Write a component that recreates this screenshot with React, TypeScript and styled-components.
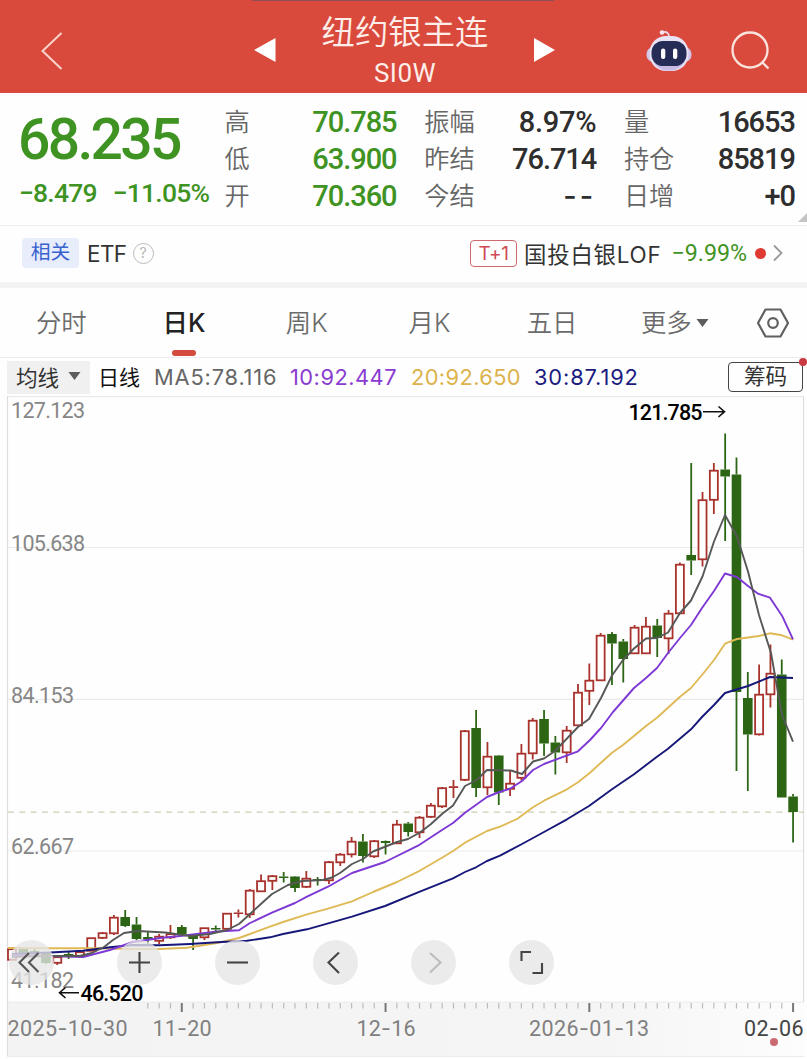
import React from "react";
import styled, { createGlobalStyle } from "styled-components";

const NUM = `Roboto, "Noto Sans CJK SC", sans-serif`;
const CJK = `Inter, "Noto Sans CJK SC", sans-serif`;

const GlobalStyle = createGlobalStyle`
  * { box-sizing: border-box; }
  body { margin: 0; background: #fff; font-family: ${CJK}; }
`;

const Page = styled.div`
  width: 807px;
  height: 1059px;
  overflow: hidden;
  background: #fefefe;
  display: flex;
  flex-direction: column;
`;

/* ---------- header ---------- */
const Header = styled.header`
  height: 93px;
  flex: none;
  background: #d94a3c;
  color: #fdeeea;
  display: grid;
  grid-template-columns: 254px 302px 251px;
  align-items: center;
`;
const HeaderLeft = styled.div`
  padding: 9px 0 0 40px;
  display: flex;
`;
const HeaderMid = styled.div`
  display: flex;
  align-items: center;
  justify-content: space-between;
  height: 93px;
`;
const Arrow = styled.svg`
  margin-top: 7px;
  flex: none;
`;
const TitleBlock = styled.div`
  display: flex;
  flex-direction: column;
  align-items: center;
  height: 93px;
`;
const Title = styled.div`
  font-size: 33.4px;
  line-height: 40px;
  font-weight: 350;
  margin-top: 12px;
  white-space: nowrap;
`;
const Code = styled.div`
  font-family: ${NUM};
  font-size: 26px;
  line-height: 32px;
  margin-top: 5px;
  letter-spacing: 0.5px;
`;
const HeaderRight = styled.div`
  display: flex;
  align-items: center;
  padding: 6px 0 0 89px;
  gap: 37px;
`;
const TopEdge = styled.div`
  position: absolute;
  top: 0;
  left: 252px;
  width: 302px;
  height: 1px;
  background: #8d4f55;
`;

/* ---------- quote ---------- */
const Quote = styled.section`
  height: 133px;
  flex: none;
  border-bottom: 1px solid #ededed;
  display: flex;
  position: relative;
  padding: 10px 10px 0 20px;
`;
const Price = styled.div`
  width: 204.5px;
  flex: none;
  color: #3f9323;
  font-family: ${NUM};
`;
const Last = styled.div`
  font-size: 57px;
  font-weight: 500;
  line-height: 70px;
  letter-spacing: -2.7px;
  margin-top: 2px;
  margin-left: -2px;
`;
const Change = styled.div`
  display: flex;
  gap: 16px;
  font-size: 26.5px;
  line-height: 32px;
  margin-top: 2px;
  margin-left: -1px;
  letter-spacing: -0.8px;
  white-space: nowrap;
  font-weight: 500;
`;
const Stats = styled.div`
  display: grid;
  grid-template-columns: 172px 172px 171px;
  grid-auto-rows: 37.3px;
  column-gap: 27.7px;
  align-items: center;
`;
const Stat = styled.div`
  display: flex;
  justify-content: space-between;
  align-items: center;
`;
const StatName = styled.span`
  font-size: 25.2px;
  line-height: 36px;
  color: #666;
  font-weight: 350;
`;
const StatValue = styled.span<{ $down?: boolean; $dash?: boolean; $wide?: boolean }>`
  font-family: ${(p) => (p.$dash ? CJK : NUM)};
  font-weight: 500;
  font-size: 29px;
  line-height: 36px;
  letter-spacing: ${(p) => (p.$dash ? "3px" : p.$wide ? "-0.3px" : "-1.05px")};
  color: ${(p) => (p.$down ? "#3f9323" : "#2e2e2e")};
`;
const Corner = styled.svg`
  position: absolute;
  right: 0;
  bottom: 3px;
`;

/* ---------- related ---------- */
const Related = styled.section`
  height: 62px;
  flex: none;
  border-bottom: 6px solid #f3f3f4;
  display: flex;
  align-items: center;
  padding: 0 24px 2px 22px;
  color: #333;
`;
const Tag = styled.span`
  width: 57px;
  height: 30px;
  background: #e7edfb;
  color: #3a62cf;
  border-radius: 4px;
  font-size: 19.8px;
  line-height: 29px;
  text-align: center;
`;
const Etf = styled.span`
  font-size: 22.5px;
  margin: 0 6px 0 8px;
  letter-spacing: -0.6px;
`;
const Help = styled.span`
  width: 21px;
  height: 21px;
  border: 1.5px solid #bbb;
  border-radius: 50%;
  color: #b4b4b4;
  font-size: 14px;
  line-height: 18px;
  text-align: center;
`;
const Fund = styled.div`
  margin-left: auto;
  display: flex;
  align-items: center;
`;
const T1 = styled.span`
  width: 47px;
  height: 27px;
  border: 1px solid #cf6a70;
  border-radius: 4px;
  color: #cf4a55;
  font-size: 19px;
  line-height: 25px;
  text-align: center;
  letter-spacing: -0.3px;
`;
const FundName = styled.span`
  font-size: 22.4px;
  margin-left: 7px;
  white-space: nowrap;
  letter-spacing: 0.8px;
`;
const FundPct = styled.span`
  font-size: 23.2px;
  font-family: ${NUM};
  color: #3f9323;
  margin-left: 10px;
`;
const Dot = styled.i`
  width: 11px;
  height: 11px;
  border-radius: 50%;
  background: #e03a34;
  margin: 0 7px 0 8px;
`;

/* ---------- tabs ---------- */
const Tabs = styled.nav`
  height: 70px;
  flex: none;
  border-bottom: 1px solid #ececec;
  display: flex;
`;
const Tab = styled.div<{ $active?: boolean }>`
  width: 122.7px;
  flex: none;
  display: flex;
  justify-content: center;
  align-items: center;
  font-size: 25.4px;
  line-height: 72px;
  gap: 4px;
  position: relative;
  color: ${(p) => (p.$active ? "#222" : "#6b6b6b")};
  font-weight: ${(p) => (p.$active ? 500 : 350)};
`;
const Underline = styled.i`
  position: absolute;
  left: 50%;
  margin-left: -12px;
  bottom: 1px;
  width: 24px;
  height: 6px;
  border-radius: 3px;
  background: #d24b3e;
`;
const Gear = styled.div`
  width: 71px;
  padding-left: 3px;
  display: flex;
  align-items: center;
  justify-content: center;
`;

/* ---------- moving averages ---------- */
const MaBar = styled.div`
  height: 38px;
  flex: none;
  display: flex;
  align-items: center;
  padding: 0 4px 0 7px;
  font-size: 21.6px;
  white-space: nowrap;
`;
const Picker = styled.div`
  width: 83px;
  height: 33px;
  background: #f0f0f0;
  display: flex;
  align-items: center;
  gap: 9px;
  padding: 0 0 2px 9px;
  color: #333;
`;
const Period = styled.span`
  width: 56px;
  padding: 0 0 2px 8px;
  font-size: 21px;
  color: #111;
`;
const Ma = styled.span<{ $c: string; $w: number; $ls: number }>`
  width: ${(p) => p.$w}px;
  padding-left: 8px;
  color: ${(p) => p.$c};
  font-size: 21.8px;
  letter-spacing: ${(p) => p.$ls}px;
`;
const Chips = styled.div`
  margin-left: auto;
  position: relative;
  width: 75px;
  height: 30px;
  border: 1.3px solid #444;
  border-radius: 4px;
  text-align: center;
  line-height: 27px;
  color: #333;
`;
const ChipDot = styled.i`
  position: absolute;
  right: -5px;
  top: -5px;
  width: 8px;
  height: 8px;
  border-radius: 50%;
  background: #c93a42;
`;

/* ---------- chart ---------- */
const ChartBox = styled.div`
  position: relative;
  height: 663px;
  flex: none;
`;
const ChartSvg = styled.svg`
  display: block;
  font-family: ${NUM};
`;
const Tool = styled.button<{ $x: number }>`
  position: absolute;
  left: ${(p) => p.$x - 22.5}px;
  top: 543.5px;
  width: 45px;
  height: 45px;
  padding: 0;
  border: 0;
  border-radius: 50%;
  background: rgba(230, 230, 230, 0.78);
  display: flex;
  align-items: center;
  justify-content: center;
`;

// [body top, body bottom, wick top, wick bottom, rising?]
type Candle = [number, number, number, number, 0 | 1];
const candles: Candle[] = [
  [949, 960, 949, 960, 1], [949, 956, 949, 956, 0], [951, 954, 948, 957, 0], [953, 963, 953, 964, 0],
  [957, 963, 957, 965, 1], [954, 956, 951, 959, 0], [952, 956, 950, 957, 1], [938, 951, 938, 951, 1],
  [933, 938, 932, 939, 1], [917.5, 933.5, 915, 935, 1], [917, 926, 910, 927, 0], [924.5, 939, 917, 940, 0],
  [937, 939.5, 932, 945, 0], [936.5, 941, 934, 944, 1], [934, 937.5, 925, 939, 1], [927, 934, 925, 935, 0],
  [934.5, 939, 934, 950, 0], [928, 937.5, 928, 940, 1], [928, 929.5, 925.5, 931.5, 0], [913.5, 929, 913, 930, 1],
  [912.5, 914, 909.5, 917.5, 1], [890.5, 914.5, 889, 918, 1], [881, 891.5, 874.5, 892, 1], [876, 881, 875, 890, 1],
  [876.5, 878, 872, 882.5, 0], [876.5, 888, 876, 892, 0], [878.5, 887, 871, 888, 1], [879, 881, 877, 885.5, 0],
  [862, 880.5, 861, 884, 1], [854.5, 862.5, 853, 866, 1], [841.5, 854.5, 837, 857.5, 1], [841.5, 856, 834, 862.5, 0],
  [841, 856.5, 840, 858, 1], [841, 843, 840.5, 854.5, 0], [824.5, 843.5, 820, 844, 1], [823.5, 832, 822, 836.5, 0],
  [817.5, 832.5, 816, 838, 1], [805.5, 817, 803, 818, 1], [788, 806.5, 787, 808, 1], [786.2, 788, 780, 798, 1],
  [731, 780, 730, 781, 1], [728, 788, 710, 797, 0], [756.5, 787.5, 742, 795, 1], [755.5, 792.5, 755, 805, 0],
  [783.5, 789, 770, 796, 1], [753.5, 778, 744, 780.5, 1], [720.5, 753.5, 718, 759.5, 1], [719, 743.5, 710, 756, 0],
  [742.5, 752.5, 736, 774.5, 0], [730.5, 752.5, 726, 763, 1], [692.5, 725.5, 684, 726, 1], [680.5, 691, 663.5, 705, 1],
  [635.5, 680.5, 633, 681, 1], [634, 643.5, 632, 685, 0], [641.5, 659, 639, 682.5, 0], [627.5, 653.5, 625, 654, 1],
  [626.5, 653.5, 617, 654, 1], [625.5, 638, 619, 657, 0], [613.5, 638.5, 610, 654, 1], [564.5, 613.5, 562.5, 614, 1],
  [555, 560.5, 463, 575, 0], [500, 559.5, 492, 566.5, 1], [470.5, 500, 463, 514, 1], [469.5, 476.5, 433.5, 541, 0],
  [474.5, 692, 457.5, 771, 0], [698, 734.5, 672, 791, 0], [694.5, 734.5, 664.5, 735.5, 1], [673.5, 694.5, 644.5, 707.5, 1],
  [674.5, 797.5, 659.5, 797.5, 0], [796.5, 812, 794, 842.5, 0],
];

const averages = [
  {
    color: "#dfb956",
    points:
      "8,948 50,948.3 100,948.3 133,949 160,949 187,947.7 217,943 239,938 250,934 270,926.7 283,922 307,914.3 328,908.7 352,901.3 373,892 397,882 418,871.7 442,857.7 453,851 465,842.7 487,831 500,826.7 517,819 533,807.3 544,800.7 567,789.3 578,782.3 590,772.7 612,752.7 623,745 646,726 657,717.7 680,696.7 691,688 702,675 714,660 725,643.7 737,639 759,636 770,633.3 782,635.3 793,639.7",
  },
  {
    color: "#17177a",
    points:
      "12,954 50,952.5 83,950.7 110,947.3 133,945 160,945.3 190,944 217,942.3 247,940.7 270,937.3 283,934 307,929.3 352,916.7 385,906 418,892.3 453,878.3 465,872 476,867.3 487,861 500,855.7 522,844 544,832 567,819.3 589,806 612,789.3 634,774.3 657,756.7 668,748.7 691,729.3 702,717 714,705 725,693 748,686 770,677 793,678",
  },
  {
    color: "#7e38d4",
    points:
      "12,955 46,956 83,957 110,950 133,942 160,938 180,936 197,934 217,931.5 239,930.3 250,923 272,912.7 295,903 307,896.7 328,886.7 352,873 385,862 418,845.7 442,830 453,823 465,812.7 487,797 498,792.5 510,788.7 522,781 533,770 544,764 578,751.3 590,740 601,728 613,712 634,688 646,678 657,668 668,653 680,638 691,625 702,608 714,591 725,573.5 737,577 748,586 758,593.7 770,597.7 782,615.7 793,639.3",
  },
  {
    color: "#565856",
    points:
      "12,957 46,956 80,956 92,953 104,947 113,940 124,933 138,931 165,932.5 190,936 210,934 227,930 239,924 250,914 262,903 272,894 288,885 302,881 323,880 332,877.5 340,873 352,864 363,859 373,851.5 397,842 408,839 420,832.5 431,824 442,814 453,805.5 465,786 476,780.5 487,770 511,770.5 522,774 533,761.5 544,758.5 555,751 578,727 589,719 601,698 612,675.5 623,660 634,648.5 646,638.5 657,638 668,632.5 680,613 691,600.5 702.5,576.5 714,541.5 725,515 737,536.5 748,571.5 759,615 771,653 777,687 782,715 793,741.7",
  },
];

const STEP = 11.32;
const cx = (i: number) => 12 + STEP * i;

function CandleMark({ c, i }: { c: Candle; i: number }) {
  const [top, bottom, high, low, up] = c;
  const x = cx(i);
  const color = up ? "#a8322c" : "#2c6614";
  const flat = bottom - top < 3;
  return (
    <g stroke={color} strokeWidth={1.8}>
      {high < top && <line x1={x} x2={x} y1={high} y2={top} />}
      {low > bottom && <line x1={x} x2={x} y1={bottom} y2={low} />}
      {flat ? (
        <rect x={x - 4.7} y={top} width={9.4} height={bottom - top} fill={color} stroke="none" />
      ) : up ? (
        <rect x={x - 4} y={top + 0.2} width={8} height={bottom - top - 0.4} fill="#fff" />
      ) : (
        <rect x={x - 4.8} y={top} width={9.6} height={bottom - top} fill={color} stroke="none" />
      )}
    </g>
  );
}

function Dashed({ text }: { text: string }) {
  return (
    <>
      {text.split("-").map((part, i) => (
        <React.Fragment key={i}>
          {i > 0 && <tspan fontFamily="Inter">-</tspan>}
          {part}
        </React.Fragment>
      ))}
    </>
  );
}

const levels: [string, number][] = [
  ["127.123", 418], ["105.638", 550.5], ["84.153", 702.5], ["62.667", 854], ["41.182", 987.5],
];
const dates: [string, number, number, string][] = [
  ["2025-10-30", 7.5, 120, "#808080"], ["11-20", 152.5, 59, "#808080"], ["12-16", 356.5, 59, "#808080"],
  ["2026-01-13", 529, 120, "#808080"], ["02-06", 744, 59.5, "#444"],
];

function Chart() {
  return (
    <ChartSvg width="807" height="663" viewBox="0 396 807 663">
      <defs>
        <linearGradient id="axis" x1="0" x2="1" y1="0" y2="0">
          <stop offset="0" stopColor="#f3f3f3" />
          <stop offset="0.75" stopColor="#f5f5f5" />
          <stop offset="1" stopColor="#fdfdfd" />
        </linearGradient>
      </defs>
      <rect x="7" y="1002" width="797" height="54" fill="url(#axis)" />
      <g stroke="#ebebeb" strokeWidth="1.2">
        <path d="M7 396.6H804M7 547.5H804M7 699.3H804M7 851H804M7 1002H804M7 1056.5H804" />
        <path d="M7.5 396V1056M803.5 396V1002" stroke="#dedede" />
      </g>
      <path d="M8 812.2H804" stroke="#cdcdb4" strokeWidth="1.2" strokeDasharray="6 5.3" />
      {Array.from({ length: 58 }, (_, k) => k + 12).map((i) => {
        const major = (i - 15) % 18 === 0;
        return (
          <line key={i} x1={cx(i)} x2={cx(i)} y1={1003} y2={major ? 1012 : 1008.5}
            stroke={major ? "#777" : "#bbb"} strokeWidth={major ? 2 : 1.2} />
        );
      })}
      {candles.map((c, i) => <CandleMark key={i} c={c} i={i} />)}
      {averages.map((a) => (
        <polyline key={a.color} points={a.points} fill="none" stroke={a.color} strokeWidth="1.9" strokeLinejoin="round" />
      ))}
      {levels.map(([t, y]) => (
        <text key={t} x="11" y={y} fontSize="21.5" fill="#868686" textLength={t.length === 7 ? 74 : 63}>{t}</text>
      ))}
      <text x="628.5" y="420" fontSize="21.5" fontWeight="500" fill="#000" textLength="74">121.785</text>
      <path d="M703 411.7H724M718.5 406.500L724.500 411.700L718.500 417" fill="none" stroke="#111" strokeWidth="1.6" />
      <text x="80.5" y="1000.5" fontSize="21.5" fontWeight="500" fill="#000" textLength="63">46.520</text>
      <path d="M79 992.7H60M65.500 987.500L59.500 992.700L65.500 998" fill="none" stroke="#111" strokeWidth="1.6" />
      {dates.map(([t, x, w, c]) => (
        <text key={t} x={x} y="1036" fontSize="21.5" fill={c} textLength={w}><Dashed text={t} /></text>
      ))}
      <circle cx="774" cy="1042" r="4" fill="#cc6a72" />
    </ChartSvg>
  );
}

const tools: [number, string, string][] = [
  [31, "M20 13L10.500 22.500L20 32M29.500 13L20 22.500L29.500 32", "#555"],
  [139.5, "M12 22.500H33M22.500 12V33", "#444"],
  [237.5, "M12 22.500H33", "#444"],
  [335.5, "M26 12.500L15.500 22.500L26 33", "#444"],
  [433.5, "M19 13L29.500 22.500L19 32.500", "#bdbdbd"],
  [531.5, "M12.500 21V12H22M33 23V33H23.500", "#444"],
];

const stats: [string, string, boolean?][] = [
  ["高", "70.785", true], ["振幅", "8.97%"], ["量", "16653"],
  ["低", "63.900", true], ["昨结", "76.714"], ["持仓", "85819"],
  ["开", "70.360", true], ["今结", "--"], ["日增", "+0"],
];

const Caret = () => (
  <svg width="13" height="10" viewBox="0 0 13 10"><path d="M0.500 1H12.500L6.500 9Z" fill="#5c5c5c" /></svg>
);

export default function App() {
  return (
    <Page>
      <GlobalStyle />
      <Header>
        <TopEdge />
        <HeaderLeft>
          <svg width="24" height="40" viewBox="0 0 24 40">
            <path d="M21.500 2L2.500 20L21.500 38" fill="none" stroke="#f7d3cc" strokeWidth="2" />
          </svg>
        </HeaderLeft>
        <HeaderMid>
          <Arrow width="22" height="24" viewBox="0 0 22 24"><path d="M0 12L21.500 0V24Z" fill="#fff" /></Arrow>
          <TitleBlock>
            <Title>纽约银主连</Title>
            <Code>SI0W</Code>
          </TitleBlock>
          <Arrow width="22" height="24" viewBox="0 0 22 24"><path d="M21 12L0 0V24Z" fill="#fff" /></Arrow>
        </HeaderMid>
        <HeaderRight>
          <svg width="48" height="44" viewBox="0 0 48 44">
            <path d="M17 4.500C22 3 24 5 24 9" fill="none" stroke="#e9d5e6" strokeWidth="1.800" />
            <circle cx="17" cy="4.500" r="2.300" fill="#f3e4f0" />
            <rect x="1.500" y="19" width="45" height="15" rx="7" fill="#d3c6ea" />
            <rect x="4.500" y="8" width="39" height="35" rx="16.500" fill="#eae2f5" />
            <path d="M8 33C14 46 34 46 40 33" fill="#c8bce6" />
            <rect x="6.500" y="13" width="35" height="25" rx="11.500" fill="#252c56" />
            <rect x="16" y="20.500" width="4.300" height="10.500" rx="2.100" fill="#fff" />
            <rect x="28" y="20.500" width="4.300" height="10.500" rx="2.100" fill="#fff" />
          </svg>
          <svg width="42" height="42" viewBox="0 0 42 42" fill="none" stroke="#fbe3dd" strokeWidth="2.300">
            <circle cx="20" cy="21" r="17.500" />
            <path d="M32 33L38.500 39.500" />
          </svg>
        </HeaderRight>
      </Header>

      <Quote>
        <Price>
          <Last>68.235</Last>
          <Change><span>−8.479</span><span>−11.05%</span></Change>
        </Price>
        <Stats>
          {stats.map(([name, value, down]) => (
            <Stat key={name}>
              <StatName>{name}</StatName>
              <StatValue $down={down} $dash={value === "--"} $wide={value.endsWith("%")}>{value}</StatValue>
            </Stat>
          ))}
        </Stats>
        <Corner width="9" height="9" viewBox="0 0 9 9"><path d="M9 0V9H0Z" fill="#c4c4c4" /></Corner>
      </Quote>

      <Related>
        <Tag>相关</Tag>
        <Etf>ETF</Etf>
        <Help>?</Help>
        <Fund>
          <T1>T+1</T1>
          <FundName>国投白银LOF</FundName>
          <FundPct>−9.99%</FundPct>
          <Dot />
          <svg width="10" height="18" viewBox="0 0 10 18"><path d="M1 1.500L8.500 9L1 16.500" fill="none" stroke="#999" strokeWidth="1.800" /></svg>
        </Fund>
      </Related>

      <Tabs>
        <Tab>分时</Tab>
        <Tab $active>日K<Underline /></Tab>
        <Tab>周K</Tab>
        <Tab>月K</Tab>
        <Tab>五日</Tab>
        <Tab>更多<Caret /></Tab>
        <Gear>
          <svg width="34" height="30" viewBox="0 0 34 30" fill="none" stroke="#606060" strokeWidth="2.200">
            <path d="M9.500 1.500H24.500L32 15L24.500 28.500H9.500L2 15Z" strokeLinejoin="round" />
            <circle cx="17" cy="15" r="4.800" />
          </svg>
        </Gear>
      </Tabs>

      <MaBar>
        <Picker>均线<Caret /></Picker>
        <Period>日线</Period>
        <Ma $c="#666" $w={136} $ls={0.85}>MA5:78.116</Ma>
        <Ma $c="#8a3bd0" $w={121} $ls={0.5}>10:92.447</Ma>
        <Ma $c="#dcb24c" $w={123} $ls={0.4}>20:92.650</Ma>
        <Ma $c="#1b1b80" $w={120} $ls={0.9}>30:87.192</Ma>
        <Chips>筹码<ChipDot /></Chips>
      </MaBar>

      <ChartBox>
        <Chart />
        {tools.map(([x, d, color]) => (
          <Tool key={x} $x={x}>
            <svg width="45" height="45" viewBox="0 0 45 45"><path d={d} fill="none" stroke={color} strokeWidth="2.100" /></svg>
          </Tool>
        ))}
      </ChartBox>
    </Page>
  );
}
